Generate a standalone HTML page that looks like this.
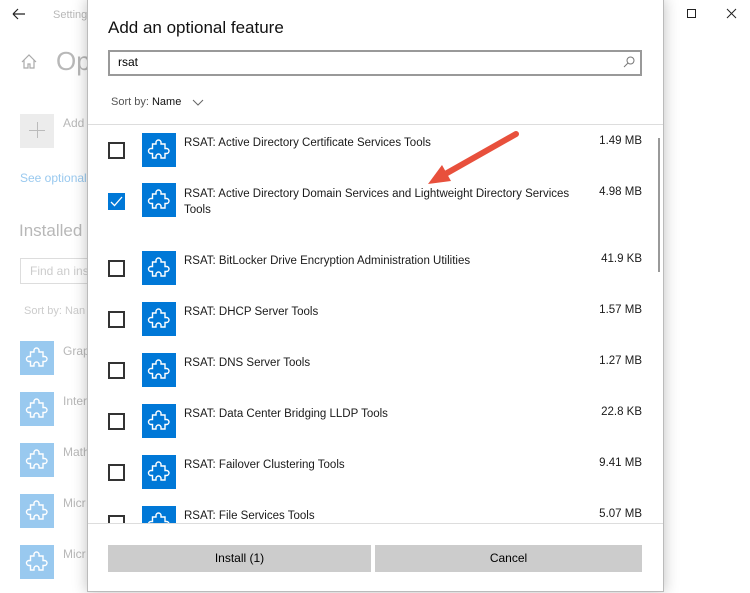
<!DOCTYPE html>
<html><head><meta charset="utf-8"><style>
*{margin:0;padding:0;box-sizing:border-box}
html,body{width:750px;height:593px;overflow:hidden}
body{background:#fff;font-family:"Liberation Sans",sans-serif;position:relative;color:#000}
.a{position:absolute;white-space:nowrap}
.bg{color:#b8b8b8}
.bgicon{position:absolute;left:20px;width:34px;height:34px;background:#99c9ef}
.dlg{position:absolute;left:87px;top:-1px;width:577px;height:593px;background:#fff;border:1px solid #bbb;box-shadow:0 0 14px rgba(0,0,0,.25)}
.cb{position:absolute;left:108px;width:17px;height:17px;border:2px solid #333;background:#fff}
.ic{position:absolute;left:142px;width:34px;height:34px;background:#0078d7}
.t{position:absolute;left:184px;font-size:11.5px;color:#1a1a1a;line-height:16px}
.s{position:absolute;right:108px;font-size:11.5px;color:#1a1a1a}
</style></head><body>
<svg width="0" height="0" style="position:absolute"><defs><symbol id="pz" viewBox="0 0 34 34"><path d="M14 9.5a2.5 2.5 0 0 1 5 0V11h4v4.5h1.5a2.5 2.5 0 0 1 0 5H23V25h-4v-1.5a2.5 2.5 0 0 0-5 0V25h-3.5v-4.5H9a2.5 2.5 0 0 1 0-5h1.5V11H14z" fill="none" stroke="#fff" stroke-width="1.4"/></symbol></defs></svg>
<svg class="a" style="left:12px;top:8px" width="14" height="12"><path d="M1 6H13M1 6L6 1M1 6L6 11" stroke="#222" fill="none" stroke-width="1.2"/></svg>
<div class="a bg" style="left:53px;top:9px;font-size:11px">Settings</div>
<svg class="a" style="left:20px;top:53px" width="18" height="17"><path d="M2 9L9 2L16 9M4 7V15H8V11H10V15H14V7" stroke="#aaa" fill="none" stroke-width="1.2"/></svg>
<div class="a bg" style="left:56px;top:46px;font-size:26px">Op</div>
<div class="a" style="left:20px;top:114px;width:34px;height:34px;background:#ececec"></div>
<div class="a" style="left:29px;top:130px;width:16px;height:1px;background:#bbb"></div>
<div class="a" style="left:37px;top:122px;width:1px;height:16px;background:#bbb"></div>
<div class="a bg" style="left:63px;top:116px;font-size:12px">Add</div>
<div class="a" style="left:20px;top:171px;font-size:12px;color:#99c9ef">See optional</div>
<div class="a bg" style="left:19px;top:221px;font-size:17px">Installed</div>
<div class="a" style="left:20px;top:258px;width:80px;height:26px;border:1px solid #ddd"></div>
<div class="a bg" style="left:30px;top:264px;font-size:12px;color:#ccc">Find an ins</div>
<div class="a bg" style="left:24px;top:305px;font-size:11px;color:#ccc">Sort by: Nan</div>
<div class="bgicon" style="top:341px"><svg width="34" height="34"><use href="#pz"/></svg></div><div class="a bg" style="left:63px;top:344px;font-size:12px">Grap</div>
<div class="bgicon" style="top:392px"><svg width="34" height="34"><use href="#pz"/></svg></div><div class="a bg" style="left:63px;top:394px;font-size:12px">Inter</div>
<div class="bgicon" style="top:443px"><svg width="34" height="34"><use href="#pz"/></svg></div><div class="a bg" style="left:63px;top:445px;font-size:12px">Math</div>
<div class="bgicon" style="top:494px"><svg width="34" height="34"><use href="#pz"/></svg></div><div class="a bg" style="left:63px;top:496px;font-size:12px">Micr</div>
<div class="bgicon" style="top:545px"><svg width="34" height="34"><use href="#pz"/></svg></div><div class="a bg" style="left:63px;top:547px;font-size:12px">Micr</div>
<div class="a" style="left:650px;top:13px;width:8px;height:1px;background:#888"></div>
<div class="a" style="left:687px;top:9px;width:9px;height:9px;border:1px solid #222"></div>
<svg class="a" style="left:726px;top:8px" width="11" height="11"><path d="M1 1L10 10M10 1L1 10" stroke="#222" stroke-width="1"/></svg>

<div class="dlg"></div>
<div class="a" style="left:108px;top:18px;font-size:17px;color:#111">Add an optional feature</div>
<div class="a" style="left:108px;top:50px;width:534px;height:26px;border:2px solid #999"></div>
<div class="a" style="left:118px;top:55px;font-size:12px">rsat</div>
<svg class="a" style="left:623px;top:56px" width="12" height="12"><circle cx="7.5" cy="4.5" r="3.5" stroke="#777" fill="none"/><path d="M5 7L1 11" stroke="#777"/></svg>
<div class="a" style="left:111px;top:96px;font-size:11px;color:#555">Sort by: <span style="color:#111">Name</span></div>
<svg class="a" style="left:192px;top:99px" width="12" height="8"><path d="M1 1L6 6L11 1" stroke="#666" fill="none"/></svg>
<div class="a" style="left:88px;top:124px;width:575px;height:1px;background:#ddd"></div>
<div class="a" style="left:658px;top:138px;width:2px;height:134px;background:#999"></div>

<div class="a" style="left:88px;top:125px;width:575px;height:398px;overflow:hidden">
<div style="position:absolute;left:-88px;top:-125px;width:750px;height:523px">
<div class="cb" style="top:142px"></div><div class="ic" style="top:133px"><svg width="34" height="34"><use href="#pz"/></svg></div><div class="t" style="top:135px">RSAT: Active Directory Certificate Services Tools</div><div class="s" style="top:135px">1.49 MB</div>
<div class="cb" style="top:193px;background:#0078d7;border-color:#0078d7"><svg width="13" height="13" style="position:absolute;left:0;top:0"><path d="M1 7L4.5 10.5L12 2" stroke="#fff" fill="none" stroke-width="1.3"/></svg></div><div class="ic" style="top:183px"><svg width="34" height="34"><use href="#pz"/></svg></div><div class="t" style="top:186px">RSAT: Active Directory Domain Services and Lightweight Directory Services<br>Tools</div><div class="s" style="top:186px">4.98 MB</div>
<div class="cb" style="top:260px"></div><div class="ic" style="top:251px"><svg width="34" height="34"><use href="#pz"/></svg></div><div class="t" style="top:253px">RSAT: BitLocker Drive Encryption Administration Utilities</div><div class="s" style="top:253px">41.9 KB</div>
<div class="cb" style="top:311px"></div><div class="ic" style="top:302px"><svg width="34" height="34"><use href="#pz"/></svg></div><div class="t" style="top:304px">RSAT: DHCP Server Tools</div><div class="s" style="top:304px">1.57 MB</div>
<div class="cb" style="top:362px"></div><div class="ic" style="top:353px"><svg width="34" height="34"><use href="#pz"/></svg></div><div class="t" style="top:355px">RSAT: DNS Server Tools</div><div class="s" style="top:355px">1.27 MB</div>
<div class="cb" style="top:413px"></div><div class="ic" style="top:404px"><svg width="34" height="34"><use href="#pz"/></svg></div><div class="t" style="top:406px">RSAT: Data Center Bridging LLDP Tools</div><div class="s" style="top:406px">22.8 KB</div>
<div class="cb" style="top:464px"></div><div class="ic" style="top:455px"><svg width="34" height="34"><use href="#pz"/></svg></div><div class="t" style="top:457px">RSAT: Failover Clustering Tools</div><div class="s" style="top:457px">9.41 MB</div>
<div class="cb" style="top:515px"></div><div class="ic" style="top:506px"><svg width="34" height="34"><use href="#pz"/></svg></div><div class="t" style="top:508px">RSAT: File Services Tools</div><div class="s" style="top:508px">5.07 MB</div>
</div></div>
<div class="a" style="left:88px;top:523px;width:575px;height:1px;background:#ddd"></div>
<div class="a" style="left:108px;top:545px;width:263px;height:27px;background:#ccc;text-align:center;line-height:27px;font-size:12px">Install (1)</div>
<div class="a" style="left:375px;top:545px;width:267px;height:27px;background:#ccc;text-align:center;line-height:27px;font-size:12px">Cancel</div>

<svg class="a" style="left:420px;top:125px" width="110" height="70"><path d="M96 9L20 52" stroke="#e8503c" stroke-width="6" stroke-linecap="round"/><path d="M8 59L22 40L31 56Z" fill="#e8503c"/></svg>
</body></html>
